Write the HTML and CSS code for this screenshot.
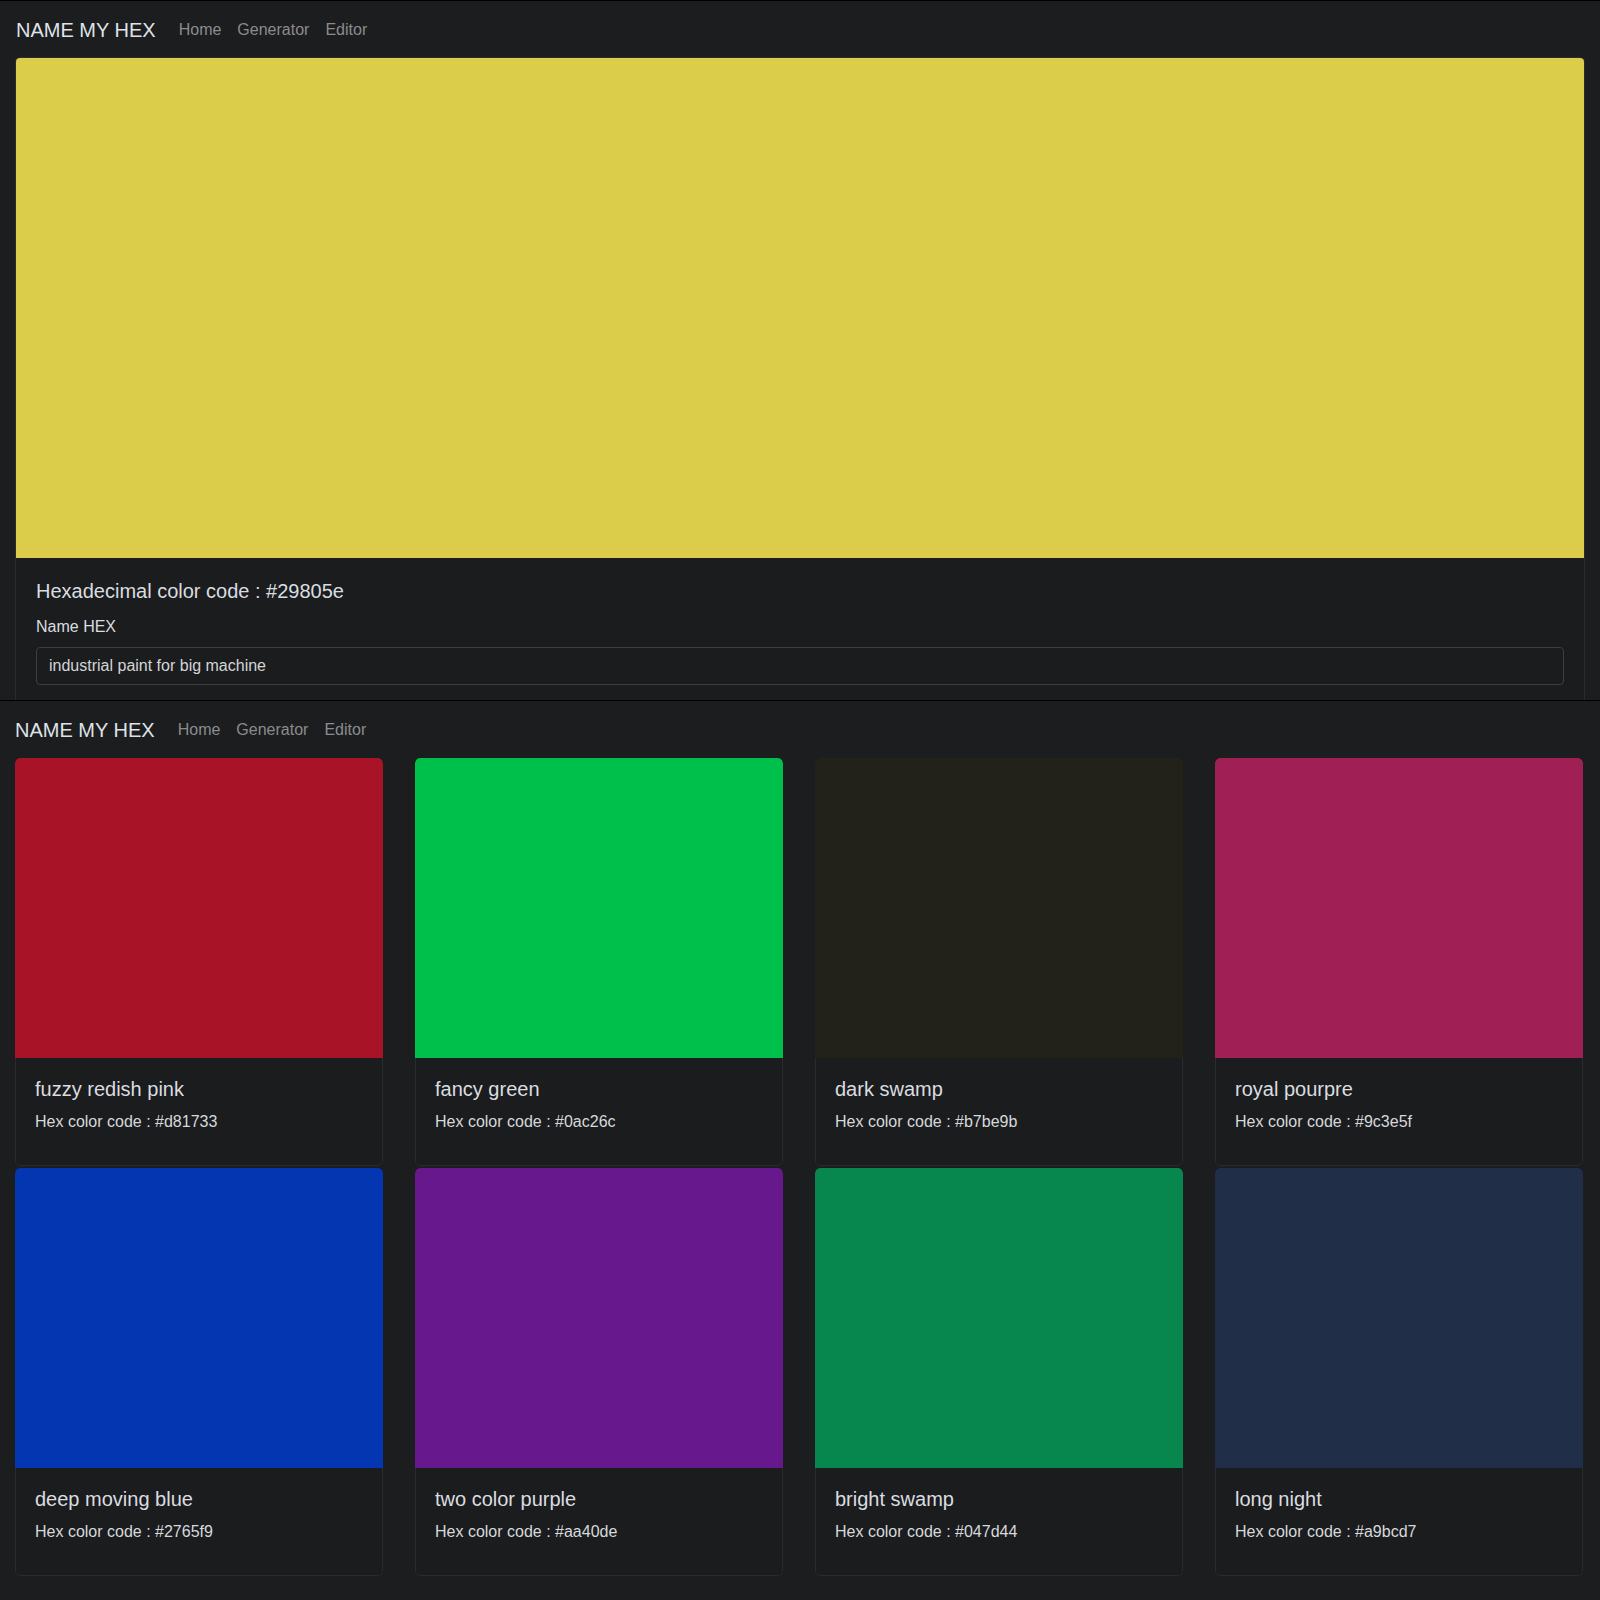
FILE: index.html
```html
<!DOCTYPE html>
<html lang="en">
<head>
<meta charset="utf-8">
<title>Name My Hex</title>
<link rel="stylesheet" href="styles.css">
</head>
<body>
<div class="screen screen-top">
  <nav class="navbar">
    <a class="brand" href="#">NAME MY HEX</a>
    <a class="nav-link" href="#">Home</a>
    <a class="nav-link" href="#">Generator</a>
    <a class="nav-link" href="#">Editor</a>
  </nav>
  <div class="card-main">
    <div class="swatch swatch-hero" style="background:#dbcd49"></div>
    <div class="main-body">
      <h5 class="main-title">Hexadecimal color code : #29805e</h5>
      <label class="field-label" for="name">Name HEX</label>
      <input class="field-input" id="name" type="text" value="industrial paint for big machine">
    </div>
  </div>
</div>
<div class="screen screen-bottom">
  <nav class="navbar navbar-shifted">
    <a class="brand" href="#">NAME MY HEX</a>
    <a class="nav-link" href="#">Home</a>
    <a class="nav-link" href="#">Generator</a>
    <a class="nav-link" href="#">Editor</a>
  </nav>
  <div class="grid">
    <div class="card"><div class="swatch" style="background:#a91328"></div><div class="card-body"><h5 class="card-title">fuzzy redish pink</h5><p class="card-text">Hex color code : #d81733</p></div></div>
    <div class="card"><div class="swatch" style="background:#00c04c"></div><div class="card-body"><h5 class="card-title">fancy green</h5><p class="card-text">Hex color code : #0ac26c</p></div></div>
    <div class="card"><div class="swatch" style="background:#22221a"></div><div class="card-body"><h5 class="card-title">dark swamp</h5><p class="card-text">Hex color code : #b7be9b</p></div></div>
    <div class="card"><div class="swatch" style="background:#a02056"></div><div class="card-body"><h5 class="card-title">royal pourpre</h5><p class="card-text">Hex color code : #9c3e5f</p></div></div>
    <div class="card"><div class="swatch" style="background:#0436b1"></div><div class="card-body"><h5 class="card-title">deep moving blue</h5><p class="card-text">Hex color code : #2765f9</p></div></div>
    <div class="card"><div class="swatch" style="background:#67188c"></div><div class="card-body"><h5 class="card-title">two color purple</h5><p class="card-text">Hex color code : #aa40de</p></div></div>
    <div class="card"><div class="swatch" style="background:#07864e"></div><div class="card-body"><h5 class="card-title">bright swamp</h5><p class="card-text">Hex color code : #047d44</p></div></div>
    <div class="card"><div class="swatch" style="background:#202f47"></div><div class="card-body"><h5 class="card-title">long night</h5><p class="card-text">Hex color code : #a9bcd7</p></div></div>
  </div>
</div>
</body>
</html>
```

FILE: styles.css
```css
* { box-sizing: border-box; }

html, body {
  margin: 0;
  padding: 0;
  background: #1c1d1f;
  font-family: "Liberation Sans", Arial, sans-serif;
  color: #dadde0;
}

.screen {
  border-top: 1px solid #000;
  overflow: hidden;
}

.screen-top { height: 700px; }
.screen-bottom { height: 900px; }

.navbar {
  height: 56px;
  display: flex;
  align-items: center;
  padding: 1px 16px 0;
}

.navbar-shifted { padding-left: 15px; }

.brand {
  font-size: 20px;
  line-height: 30px;
  color: #dfe3e7;
  text-decoration: none;
  margin-right: 15px;
}

.nav-link {
  font-size: 16px;
  line-height: 24px;
  padding: 8px;
  color: #8b8c8e;
  text-decoration: none;
}

/* hero card: swatch sits inside the border */
.card-main {
  margin: 0 15px;
  height: 700px;
  border: 1px solid #2a2b2e;
  border-radius: 5px;
  overflow: hidden;
  background: #1b1c1e;
}

.swatch { height: 300px; }
.swatch-hero { height: 500px; }

.main-body { padding: 21px 20px; }

.main-title {
  margin: 0 0 12px;
  font-size: 20px;
  line-height: 24px;
  font-weight: normal;
  color: #dadde0;
}

.field-label {
  display: block;
  font-size: 16px;
  line-height: 24px;
  margin-bottom: 8px;
  color: #dadde0;
}

.field-input {
  display: block;
  width: 100%;
  height: 38px;
  padding: 0 12px;
  font-family: inherit;
  font-size: 16px;
  color: #d3d5d8;
  background: #1b1c1e;
  border: 1px solid #3b3e42;
  border-radius: 4px;
  outline: none;
}

.grid {
  display: grid;
  grid-template-columns: repeat(4, 368px);
  column-gap: 32px;
  row-gap: 2px;
  padding: 1px 15px 0;
}

/* grid cards: swatch spans the full card width */
.card {
  border-radius: 5px;
  overflow: hidden;
  background: #1b1c1e;
}

.swatch:not(.swatch-hero) { border-radius: 5px 5px 0 0; }

.card-body {
  padding: 19px 19px 31px;
  border: 1px solid #2a2b2e;
  border-top: none;
  border-radius: 0 0 5px 5px;
}

.card-title {
  margin: 0 0 9px;
  font-size: 20px;
  line-height: 24px;
  font-weight: normal;
  color: #dadde0;
}

.card-text {
  margin: 0;
  font-size: 16px;
  line-height: 24px;
  color: #d6d9dc;
}
```
